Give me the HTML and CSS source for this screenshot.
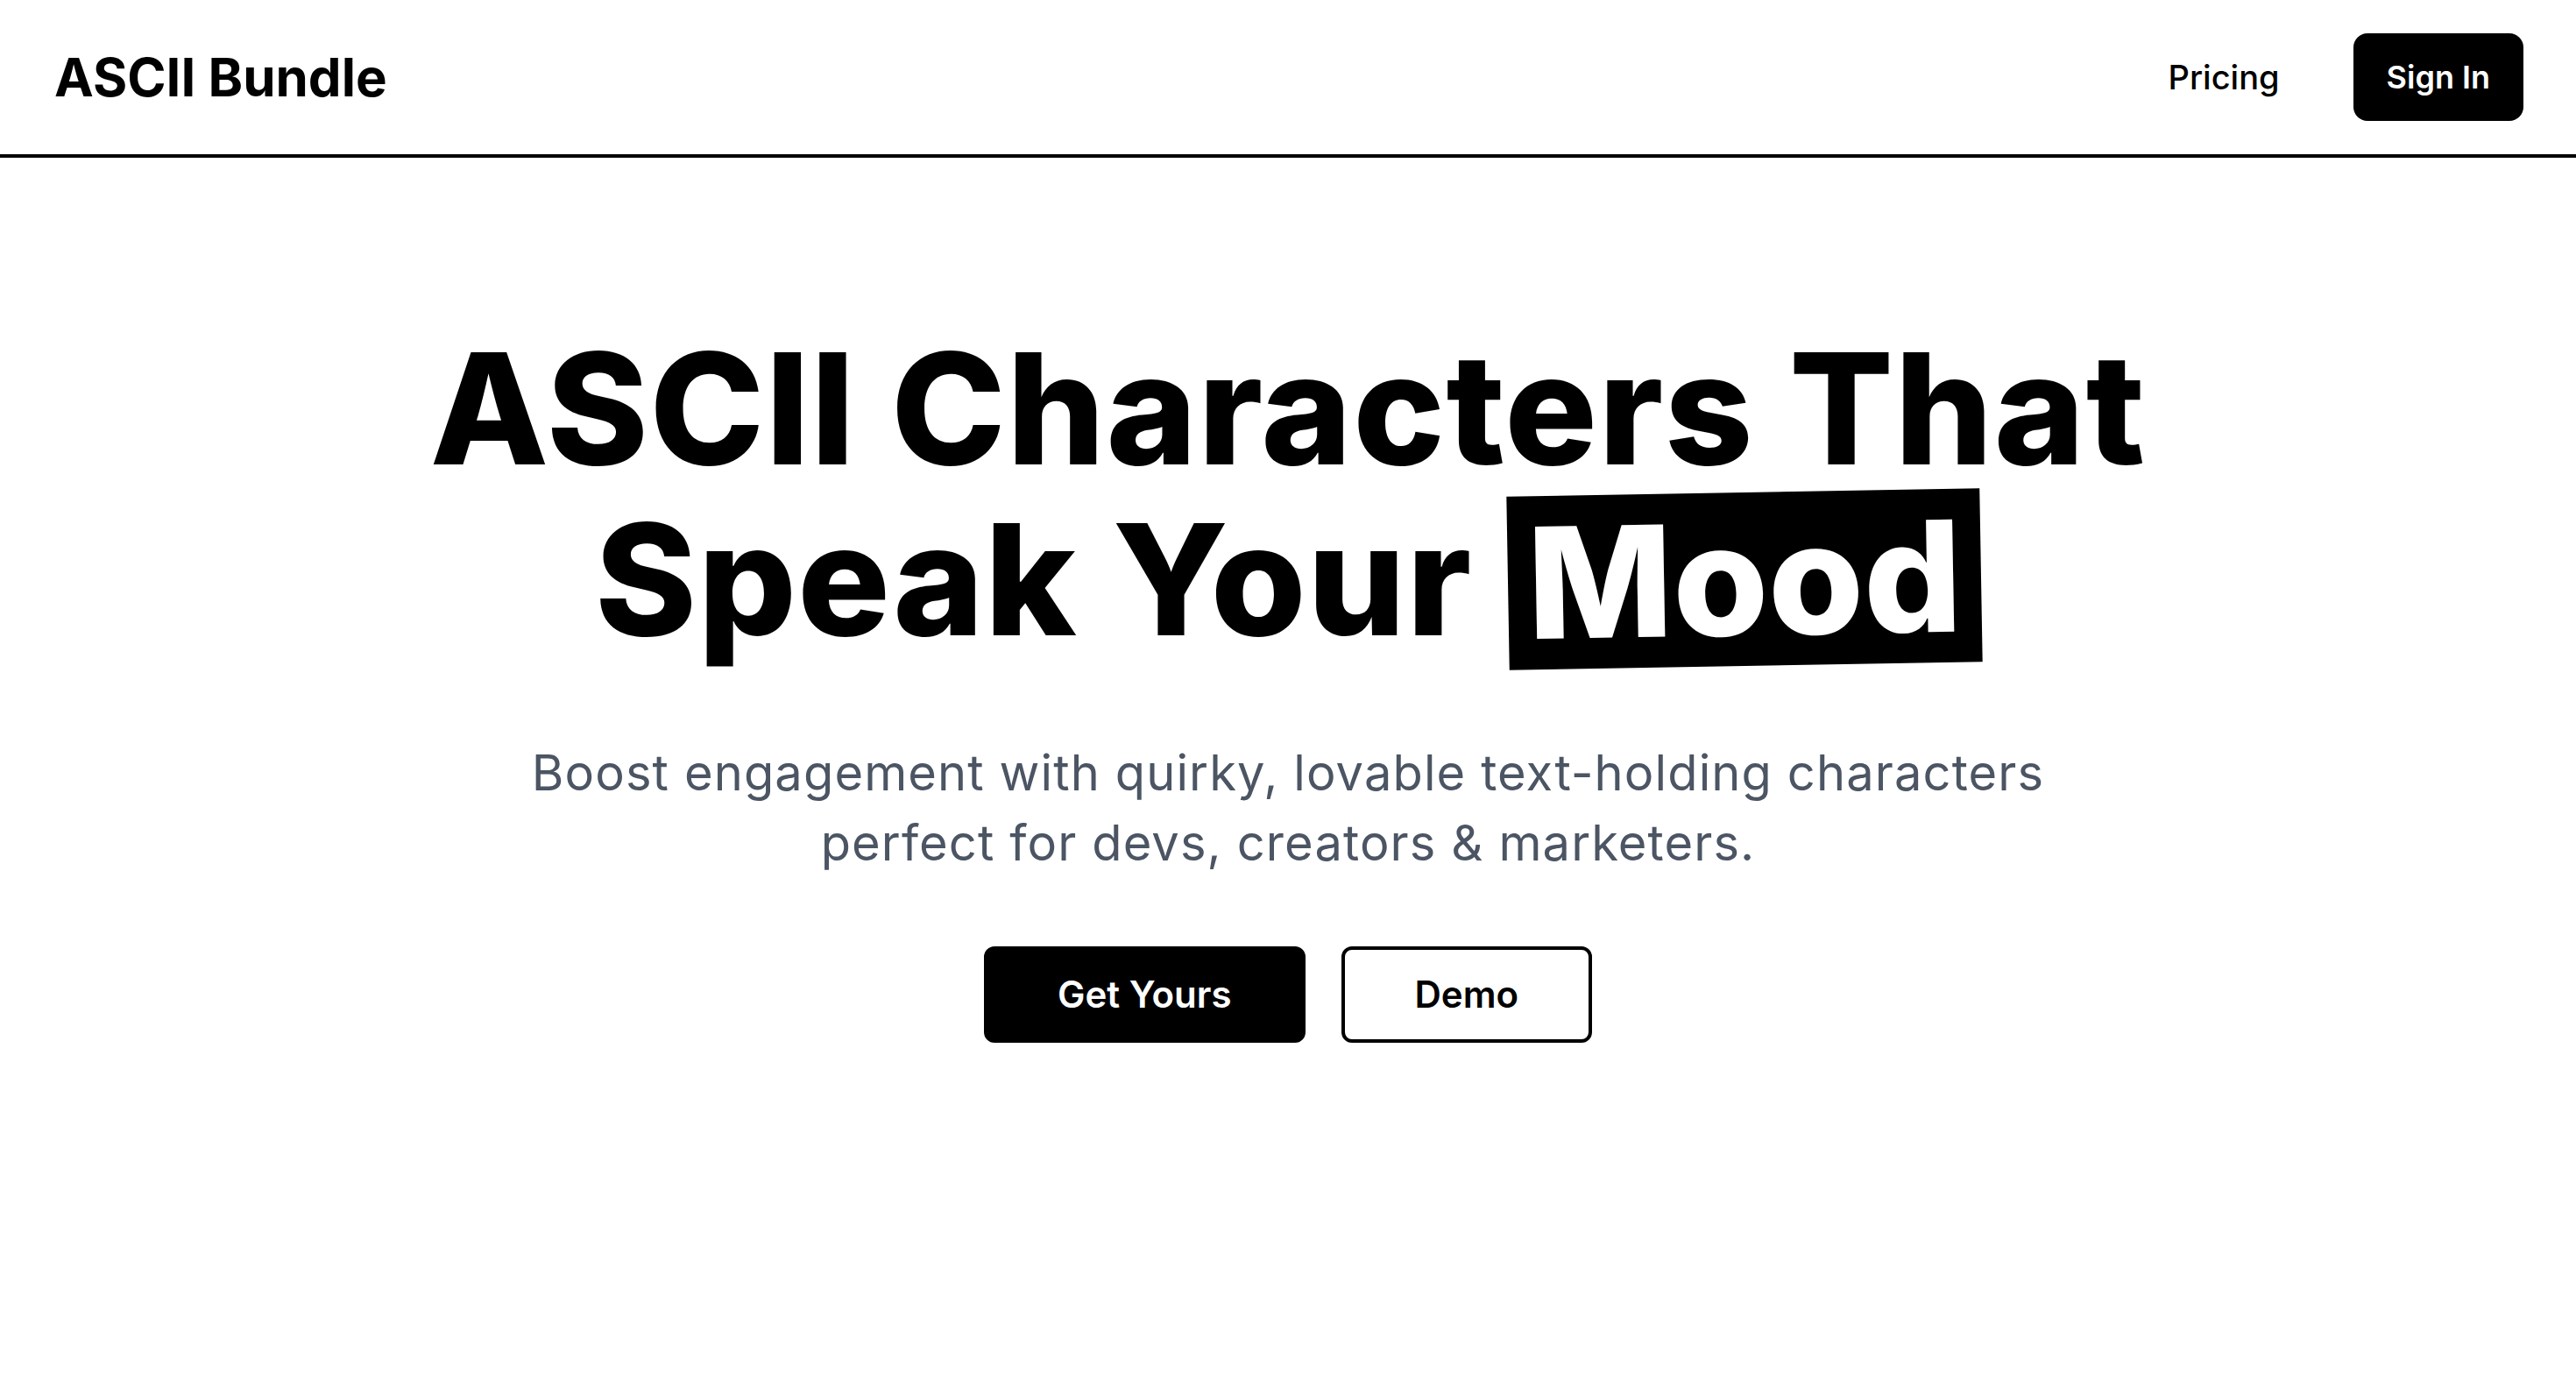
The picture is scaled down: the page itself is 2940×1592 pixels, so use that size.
FILE: index.html
```html
<!DOCTYPE html>
<html lang="en">
<head>
    <meta charset="UTF-8">
    <meta name="viewport" content="width=device-width, initial-scale=1.0">
    <title>ASCII Bundle</title>
    <link rel="stylesheet" href="styles.css">
</head>
<body>
    <header class="site-header">
        <a class="logo" href="#">ASCII Bundle</a>
        <nav class="nav">
            <a class="nav-link" href="#">Pricing</a>
            <a class="btn-signin" href="#">Sign In</a>
        </nav>
    </header>

    <main class="hero">
        <h1 class="hero-title">ASCII Characters That<br>Speak Your <span class="mood">Mood</span></h1>
        <p class="hero-sub">Boost engagement with quirky, lovable text-holding characters perfect for devs, creators &amp; marketers.</p>
        <div class="hero-actions">
            <a class="btn btn-primary" href="#">Get Yours</a>
            <a class="btn btn-outline" href="#">Demo</a>
        </div>
    </main>
</body>
</html>
```

FILE: styles.css
```css
* {
    box-sizing: border-box;
}
body {
    margin: 0;
    font-family: 'Inter', 'Liberation Sans', sans-serif;
    color: #000;
    background: #fff;
}
a {
    color: inherit;
    text-decoration: none;
}
.site-header {
    display: flex;
    align-items: center;
    justify-content: space-between;
    height: 180px;
    padding: 0 60px 0 62px;
    border-bottom: 4px solid #000;
}
.logo {
    font-size: 60px;
    font-weight: 700;
}
.nav {
    display: flex;
    align-items: center;
    gap: 84px;
}
.nav-link {
    font-size: 38px;
    font-weight: 500;
}
.btn-signin {
    display: flex;
    align-items: center;
    height: 100px;
    padding: 0 38px;
    background: #000;
    color: #fff;
    border-radius: 16px;
    font-size: 36px;
    font-weight: 600;
}
.hero {
    display: flex;
    flex-direction: column;
    align-items: center;
    text-align: center;
    padding-top: 190px;
}
.hero-title {
    margin: 0;
    font-size: 176px;
    font-weight: 800;
    line-height: 1.09;
    letter-spacing: 0.008em;
}
.mood {
    display: inline-block;
    background: #000;
    color: #fff;
    padding: 3px 22px;
    letter-spacing: 0;
    transform: rotate(-1deg);
}
.hero-sub {
    max-width: 1800px;
    margin: 82px 0 0;
    font-size: 56px;
    line-height: 80px;
    letter-spacing: 0.02em;
    color: #4b5563;
}
.hero-actions {
    display: flex;
    gap: 41px;
    margin-top: 78px;
}
.btn {
    display: flex;
    align-items: center;
    height: 110px;
    padding: 0 80px;
    border: 4px solid #000;
    border-radius: 12px;
    font-size: 42px;
    font-weight: 600;
}
.btn-primary {
    background: #000;
    color: #fff;
}
.btn-outline {
    background: #fff;
    color: #000;
}
```
